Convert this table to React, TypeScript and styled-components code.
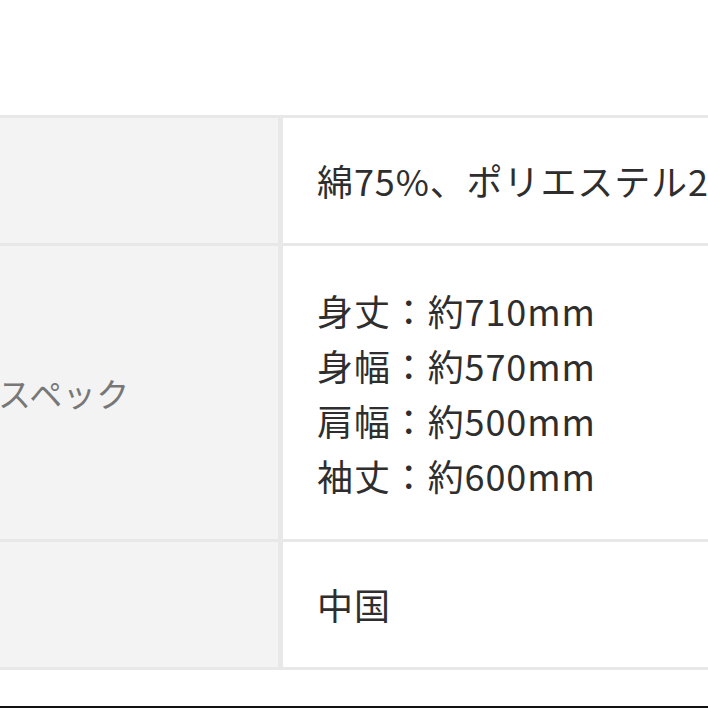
import React from "react";
import styled, { createGlobalStyle } from "styled-components";

const GlobalStyle = createGlobalStyle`
  html, body {
    margin: 0;
    padding: 0;
    background: #ffffff;
    overflow: hidden;
  }
  body {
    font-family: "Noto Sans CJK JP", "Noto Sans", sans-serif;
  }
`;

const Page = styled.div`
  width: 708px;
  height: 708px;
  box-sizing: border-box;
  padding-top: 115px;
  overflow: hidden;
  display: flex;
  flex-direction: column;
  background: #ffffff;
`;

const Table = styled.div`
  margin-left: -130px;
  width: 1100px;
  border-top: 3px solid #e8e8e8;
  display: flex;
  flex-direction: column;
`;

const Row = styled.div<{ $h: number }>`
  display: grid;
  grid-template-columns: 413px 1fr;
  height: ${(p) => p.$h}px;
  border-bottom: 3px solid #e8e8e8;
`;

const Label = styled.div`
  box-sizing: border-box;
  background: #f3f3f3;
  border-right: 5px solid #e8e8e8;
  display: flex;
  align-items: center;
  padding-left: 0;
  text-indent: -5px;
  font-size: 33px;
  letter-spacing: 0.5px;
  color: #777777;
  white-space: nowrap;
  overflow: hidden;
`;

const Value = styled.div`
  display: flex;
  flex-direction: column;
  justify-content: center;
  padding-left: 34px;
  font-size: 36px;
  letter-spacing: 0.9px;
  line-height: 55px;
  color: #2e2e2e;
  white-space: nowrap;
  background: #ffffff;
`;

const Line = styled.div`
  display: block;
`;

const BottomEdge = styled.div`
  margin-top: auto;
  height: 2px;
  background: #111111;
`;

const rows = [
  { label: "素材", h: 125, lines: ["綿75%、ポリエステル25%"] },
  {
    label: "サイズ・スペック",
    h: 293,
    lines: ["身丈：約710mm", "身幅：約570mm", "肩幅：約500mm", "袖丈：約600mm"],
  },
  { label: "原産国", h: 125, lines: ["中国"] },
];

export default function App() {
  return (
    <>
      <GlobalStyle />
      <Page>
        <Table>
          {rows.map((r) => (
            <Row key={r.label} $h={r.h}>
              <Label>{r.label}</Label>
              <Value>
                {r.lines.map((l) => (
                  <Line key={l}>{l}</Line>
                ))}
              </Value>
            </Row>
          ))}
        </Table>
        <BottomEdge />
      </Page>
    </>
  );
}
